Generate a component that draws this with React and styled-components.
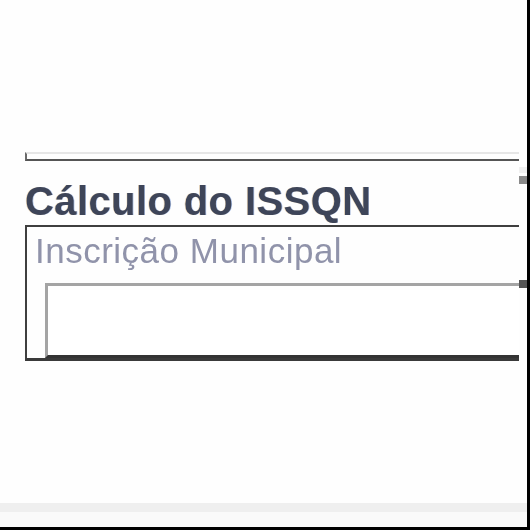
import React from "react";
import styled, { createGlobalStyle } from "styled-components";

//////////// STYLED COMPONENTS /////////////
const Global = createGlobalStyle`
  html, body {
    margin: 0;
    padding: 0;
    background: #ffffff;
  }
  * {
    box-sizing: border-box;
  }
`;

const Frame = styled.div`
  width: 530px;
  height: 530px;
  display: flex;
  flex-direction: column;
  background: #fefefe;
  border-right: 3px solid #000;
  border-bottom: 3px solid #000;
  font-family: "Liberation Sans", Arial, sans-serif;
  overflow: hidden;
`;

const Body = styled.div`
  flex: 1;
  display: flex;
  padding: 152px 0 0 25px;
`;

const Clip = styled.div`
  width: 494px;
  overflow: hidden;
  filter: blur(0.6px);
`;

const PrevBox = styled.div`
  width: 520px;
  height: 9px;
  border-top: 2px solid #e6e6e6;
  border-left: 2px solid #6a6a6a;
  border-bottom: 2px solid #555;
`;

const Title = styled.h2`
  margin: 20px 0 4px 0;
  font-size: 40px;
  line-height: 40px;
  font-weight: bold;
  letter-spacing: 0.4px;
  color: #3e4559;
  white-space: nowrap;
  text-shadow: -0.7px 0 0 rgba(210, 150, 60, 0.35), 0.7px 0 0 rgba(60, 110, 200, 0.4);
`;

const Fieldset = styled.div`
  width: 520px;
  padding: 6px 0 0 8px;
  border-top: 2px solid #3f3f3f;
  border-left: 2px solid #3f3f3f;
  border-bottom: 3px solid #3a3a3a;
`;

const Label = styled.div`
  font-size: 35px;
  line-height: 35px;
  letter-spacing: 0.5px;
  color: #9093aa;
  white-space: nowrap;
`;

const Input = styled.div`
  margin: 15px 0 0 10px;
  height: 75px;
  border-top: 3px solid #a4a4a4;
  border-left: 3px solid #a4a4a4;
  border-bottom: 3px solid #333;
  background: #fff;
`;

const Side = styled.div`
  width: 8px;
  display: flex;
  flex-direction: column;
`;

const Mark = styled.div`
  height: ${(p) => p.h}px;
  margin-top: ${(p) => p.top}px;
  background: ${(p) => p.c};
`;

const Footer = styled.div`
  height: 24px;
  border-top: 9px solid #efefef;
  background: #fafafa;
  margin-top: auto;
`;
//////////// END STYLED COMPONENTS /////////////

export default function App() {
  return (
    <>
      <Global />
      <Frame>
        <Body>
          <Clip>
            <PrevBox />
            <Title>Cálculo do ISSQN</Title>
            <Fieldset>
              <Label>Inscrição Municipal</Label>
              <Input />
            </Fieldset>
          </Clip>
          <Side>
            <Mark top={15} h={6} c="#f0f0f0" />
            <Mark top={3} h={8} c="#8a8a8a" />
            <Mark top={96} h={8} c="#555" />
          </Side>
        </Body>
        <Footer />
      </Frame>
    </>
  );
}
